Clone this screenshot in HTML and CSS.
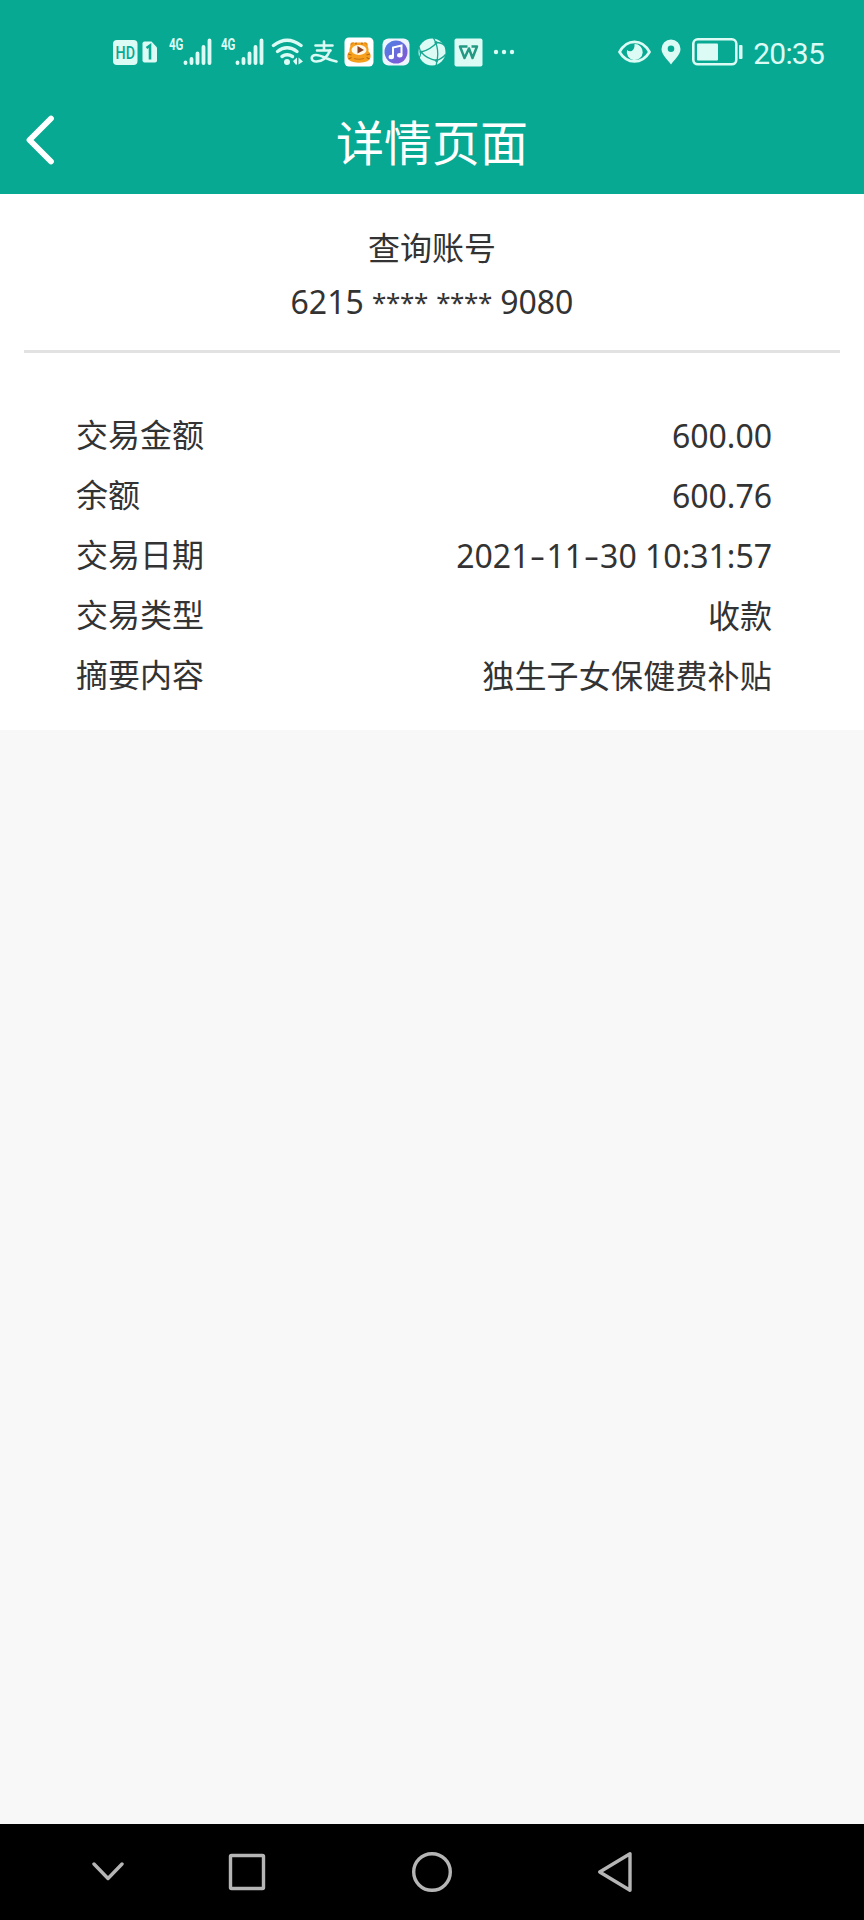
FILE: index.html
```html
<!DOCTYPE html>
<html lang="zh-CN">
<head>
    <meta charset="UTF-8">
    <meta name="viewport" content="width=device-width, initial-scale=1.0">
    <title>详情页面</title>
    <link rel="stylesheet" href="styles.css">
</head>
<body>
    <div class="page">
        <header class="header">
            <div class="status-bar">
                <div class="status-left">
                    <svg class="icon-sim" width="46" height="30" viewBox="0 0 46 30">
                        <rect x="1" y="3" width="24.500" height="25" rx="4" fill="currentColor"/>
                        <text class="sim-text" x="3.500" y="22" textLength="19.500" lengthAdjust="spacingAndGlyphs">HD</text>
                        <path d="M32.500 4.500h7l5.500 6v13a2 2 0 0 1-2 2H32.500a2 2 0 0 1-2-2v-17a2 2 0 0 1 2-2z" fill="currentColor"/>
                        <path d="M34.500 11l3.500-2.500v14" fill="none" stroke="#08a993" stroke-width="2.600"/>
                    </svg>
                    <svg class="icon-signal" width="44" height="38" viewBox="0 -4 44 38">
                        <text class="net-text" x="0" y="13" textLength="14.500" lengthAdjust="spacingAndGlyphs">4G</text>
                        <path d="M16.500 25.500v.5M22.500 22v4M28.500 16.500v9.500M34.500 10v16M40.500 3.500V26" fill="none" stroke="currentColor" stroke-width="3.800" stroke-linecap="round"/>
                    </svg>
                    <svg class="icon-signal" width="44" height="38" viewBox="0 -4 44 38">
                        <text class="net-text" x="0" y="13" textLength="14.500" lengthAdjust="spacingAndGlyphs">4G</text>
                        <path d="M16.500 25.500v.5M22.500 22v4M28.500 16.500v9.500M34.500 10v16M40.500 3.500V26" fill="none" stroke="currentColor" stroke-width="3.800" stroke-linecap="round"/>
                    </svg>
                    <svg class="icon-wifi" width="33" height="30" viewBox="0 0 33 30">
                        <g fill="none" stroke="currentColor" stroke-width="3.400" stroke-linecap="round">
                            <path d="M2.500 8.500q13.500-10.500 27.500 0"/>
                            <path d="M6.500 14.500q9.500-7.500 19.500 0"/>
                            <path d="M11 19.500q5-3.500 10.500 0"/>
                        </g>
                        <circle cx="16" cy="25" r="3" fill="currentColor"/>
                        <path d="M26 20.500v7h-1.500l-2.500-3.500zM27.500 27.500v-7l4.500 4z" fill="currentColor"/>
                    </svg>
                    <svg class="icon-alipay" width="28" height="28" viewBox="0 0 28 28" role="img" aria-label="支">
                        <g fill="none" stroke="currentColor" stroke-width="2.600" stroke-linecap="round" stroke-linejoin="round">
                            <path d="M5.500 7.500h17M14 3.500v8.500M7 12.500h13.500"/>
                            <path d="M20 12.500C17 19.500 12 23.500 6.500 23.500c-6 0-6.500-6.500-.5-6.500 6 0 10 4.500 20.500 6.500"/>
                        </g>
                    </svg>
                    <svg class="icon-video" width="30" height="30" viewBox="0 0 30 30">
                        <rect x=".5" y=".5" width="29" height="29" rx="4.500" fill="#fff"/>
                        <circle cx="9" cy="8" r="2.700" fill="#e68a14"/>
                        <circle cx="21" cy="8" r="2.700" fill="#e68a14"/>
                        <path d="M9 6.500c3-1.500 9-1.500 12 0 3 2 4 5 3.500 8 2.500 2 3 6 .5 8.500-4 3.500-16 3.500-20 0-2.500-2.500-2-6.500.5-8.500-.5-3 .5-6 3.500-8z" fill="#f7a01d"/>
                        <path d="M4 17l3.500 1M4.500 22l3-1.500M26 17l-3.500 1M25.500 22l-3-1.500M12 5.500v2M18 5.500v2" stroke="#b86810" stroke-width="1.300"/>
                        <ellipse cx="15" cy="13" rx="7.500" ry="5" fill="#fff8e8"/>
                        <path d="M13.500 9l6.500 4-6.500 3.500z" fill="#884327"/>
                        <path d="M10 21.500q5 1.500 10 0" fill="none" stroke="#c87515" stroke-width="1.200"/>
                    </svg>
                    <svg class="icon-music" width="28" height="28" viewBox="0 0 28 28">
                        <defs>
                            <linearGradient id="music" x1="0" y1="0" x2="1" y2="1">
                                <stop offset="0" stop-color="#4a83e6"/>
                                <stop offset="1" stop-color="#8753d2"/>
                            </linearGradient>
                        </defs>
                        <rect x=".5" y=".5" width="27" height="27" rx="6" fill="#eef5ff"/>
                        <circle cx="14" cy="14" r="11.500" fill="url(#music)"/>
                        <path d="M11 19V9.500l8.500-2V17" fill="none" stroke="#fff" stroke-width="2"/>
                        <ellipse cx="9.300" cy="19" rx="2.700" ry="2.200" fill="#fff"/>
                        <ellipse cx="17.800" cy="17.200" rx="2.700" ry="2.200" fill="#fff"/>
                    </svg>
                    <svg class="icon-globe" width="28" height="28" viewBox="0 0 28 28">
                        <circle cx="14" cy="14" r="13.500" fill="currentColor"/>
                        <g fill="none" stroke="#18a791" stroke-width="1.300">
                            <path d="M15.500 0q7 12 2.500 28M3 14Q12 12 19 4.500M3 14q6 7 15.500 8.500M18.500 4.500q5 0 8 3M18.500 22.500q6-2 9-6M1 20q3-4 0-11"/>
                        </g>
                        <circle cx="3" cy="14" r="1.500" fill="#18a791"/>
                        <circle cx="18" cy="4.500" r="1.500" fill="#18a791"/>
                        <circle cx="18.500" cy="22.500" r="1.600" fill="#18a791"/>
                    </svg>
                    <svg class="icon-wps" width="29" height="29" viewBox="0 0 29 29">
                        <rect x=".5" y=".5" width="28" height="28" rx="2" fill="currentColor"/>
                        <path d="M13.500 8.500H6l4.500 11.500 4.500-9.500 3.500 9.500L23 8.500h-5.500" fill="none" stroke="#239984" stroke-width="2.500" stroke-linejoin="round"/>
                    </svg>
                    <svg class="icon-more" width="22" height="6" viewBox="0 0 22 6">
                        <g fill="currentColor">
                            <circle cx="3" cy="3" r="2.200"/>
                            <circle cx="11" cy="3" r="2.200"/>
                            <circle cx="19" cy="3" r="2.200"/>
                        </g>
                    </svg>
                </div>
                <div class="status-right">
                    <svg width="33" height="24" viewBox="0 0 33 24">
                        <path d="M1.500 12C9-1.500 24-1.500 31.500 12 24 24.500 9 24.500 1.500 12z" fill="none" stroke="currentColor" stroke-width="2.700" stroke-linejoin="round"/>
                        <path d="M16.500 4a8 8 0 1 1-7.500 6c3 3 8 1 7.500-6z" fill="currentColor"/>
                    </svg>
                    <svg width="20" height="26" viewBox="0 0 20 26">
                        <path d="M10 .5a9.500 9.500 0 0 1 9.500 9.500C19.500 16 13 21 10 25.500 7 21 .5 16 .5 10A9.500 9.500 0 0 1 10 .5zm0 6a3.300 3.300 0 1 0 0 6.600 3.300 3.300 0 0 0 0-6.600z" fill="currentColor" fill-rule="evenodd"/>
                    </svg>
                    <svg width="51" height="28" viewBox="0 0 51 28">
                        <rect x="1.300" y="1.300" width="43" height="25" rx="4.500" fill="none" stroke="currentColor" stroke-width="2.600"/>
                        <rect x="5" y="5.500" width="21" height="17" rx="1" fill="currentColor"/>
                        <rect x="47" y="7" width="3.500" height="14" rx="1" fill="currentColor"/>
                    </svg>
                    <span class="time">20:35</span>
                </div>
            </div>
            <div class="title-bar">
                <svg class="back" width="30" height="50" viewBox="0 0 30 50">
                    <path d="M26 3.500L4.500 25 26 46.500" fill="none" stroke="#fff" stroke-width="5.800" stroke-linecap="round" stroke-linejoin="round"/>
                </svg>
                <h1>详情页面</h1>
            </div>
        </header>

        <main class="card">
            <div class="account">
                <p>查询账号</p>
                <p>6215 <span class="mask">****</span> <span class="mask">****</span> 9080</p>
            </div>
            <dl class="details">
                <div class="row"><dt>交易金额</dt><dd>600.00</dd></div>
                <div class="row"><dt>余额</dt><dd>600.76</dd></div>
                <div class="row"><dt>交易日期</dt><dd>2021<span class="dash">-</span>11<span class="dash">-</span>30 10:31:57</dd></div>
                <div class="row"><dt>交易类型</dt><dd>收款</dd></div>
                <div class="row"><dt>摘要内容</dt><dd class="summary">独生子女保健费补贴</dd></div>
            </dl>
        </main>

        <nav class="nav-bar">
            <svg class="nav-hide" width="32" height="20" viewBox="0 0 32 20">
                <path d="M2 2l14 14.500L30 2"/>
            </svg>
            <svg class="nav-recent" width="38" height="38" viewBox="0 0 38 38">
                <rect x="2.500" y="2.500" width="33" height="33" rx="1"/>
            </svg>
            <svg class="nav-home" width="42" height="42" viewBox="0 0 42 42">
                <circle cx="21" cy="21" r="18.300"/>
            </svg>
            <svg class="nav-back" width="36" height="42" viewBox="0 0 36 42">
                <path d="M33 2.700v36.600L2.700 21z"/>
            </svg>
        </nav>
    </div>
</body>
</html>
```
FILE: styles.css
```css
* {
    margin: 0;
    padding: 0;
    box-sizing: border-box;
}

body {
    font-family: "Noto Sans", "Noto Sans CJK SC", sans-serif;
    background: #f8f8f8;
    color: #333;
}

svg {
    display: block;
    flex-shrink: 0;
}

.page {
    display: flex;
    flex-direction: column;
    height: 1920px;
}

.header {
    height: 194px;
    background: #08a993;
}

.status-bar {
    display: flex;
    justify-content: space-between;
    align-items: center;
    height: 104px;
    padding: 0 40px 0 112px;
    color: #dcfbf5;
}

.status-left,
.status-right {
    display: flex;
    align-items: center;
}

.status-right {
    gap: 10.5px;
}

.icon-sim {
    margin-right: 11px;
}

.icon-signal {
    margin-right: 8px;
}

.icon-wifi {
    margin-left: -2px;
    margin-right: 6px;
}

.icon-alipay {
    margin-right: 6px;
}

.icon-video,
.icon-music,
.icon-globe {
    margin-right: 8px;
}

.icon-more {
    margin-left: 10px;
}

.sim-text {
    font: 500 18px Roboto, sans-serif;
    fill: #08a993;
}

.net-text {
    font: bold 16px Roboto, sans-serif;
    fill: currentColor;
}

.time {
    padding-top: 3px;
    font-family: Roboto, sans-serif;
    font-size: 30px;
    line-height: 30px;
    letter-spacing: -0.8px;
}

.title-bar {
    display: grid;
    grid-template-columns: 1fr auto 1fr;
    align-items: center;
    height: 72px;
    padding: 0 25px;
}

.title-bar h1 {
    padding-top: 4px;
    font-size: 48px;
    font-weight: 400;
    line-height: 67px;
    color: #fff;
}

.card {
    height: 536px;
    background: #fff;
}

.account {
    height: 159px;
    margin: 0 24px;
    padding-top: 27px;
    border-bottom: 3px solid #e2e2e2;
    font-size: 32px;
    line-height: 54px;
    text-align: center;
}

.mask {
    font-size: 26px;
    line-height: 1;
    letter-spacing: -0.4px;
    vertical-align: 2px;
}

.details {
    padding: 53px 92px 0 76px;
    font-size: 32px;
}

.row {
    display: flex;
    justify-content: space-between;
    height: 60px;
    line-height: 60px;
}

.row dt {
    margin-top: -1px;
}

.summary {
    letter-spacing: 0.2px;
}

.dash {
    display: inline-block;
    width: 17px;
    text-align: center;
    transform: scaleX(1.5);
}

.nav-bar {
    display: flex;
    align-items: center;
    height: 96px;
    margin-top: auto;
    padding-left: 92px;
    background: #000;
}

.nav-bar svg {
    fill: none;
    stroke: #b5b5b5;
    stroke-width: 3.4;
    stroke-linecap: round;
    stroke-linejoin: round;
}

.nav-recent {
    margin-left: 104px;
}

.nav-home {
    margin-left: 145px;
}

.nav-back {
    margin-left: 144px;
}
```
